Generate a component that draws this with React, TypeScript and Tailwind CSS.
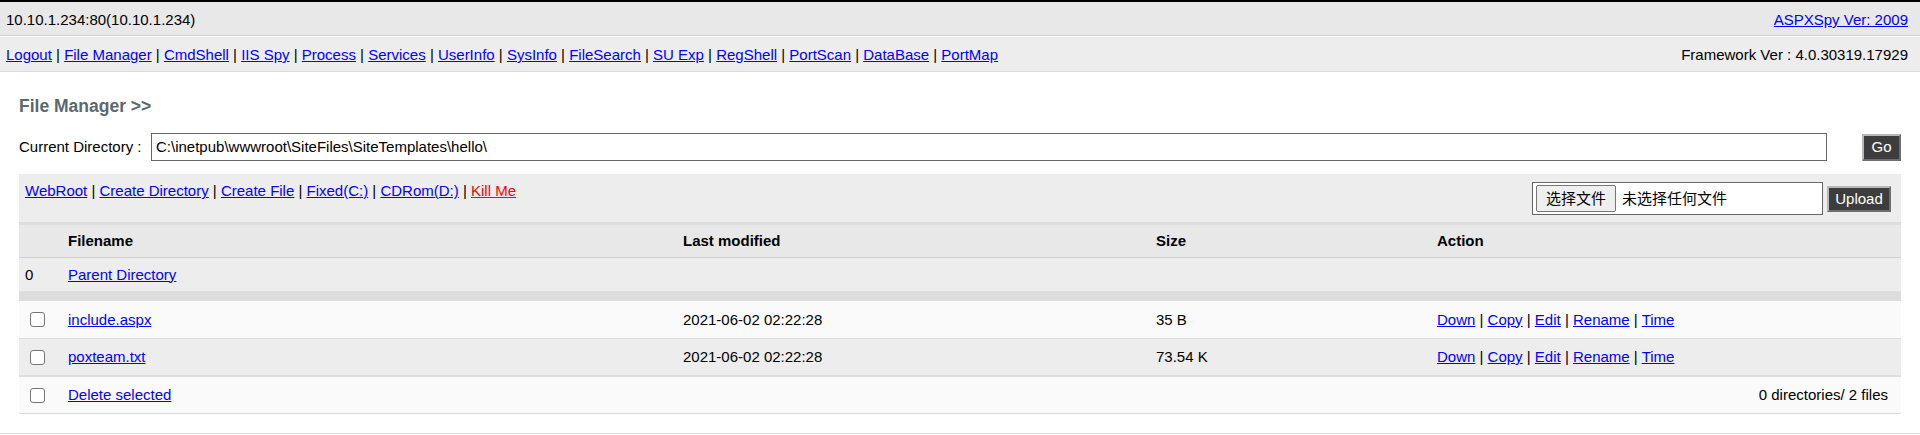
import React from 'react';

const navItems = [
  'Logout',
  'File Manager',
  'CmdShell',
  'IIS Spy',
  'Process',
  'Services',
  'UserInfo',
  'SysInfo',
  'FileSearch',
  'SU Exp',
  'RegShell',
  'PortScan',
  'DataBase',
  'PortMap',
];

const toolItems = ['WebRoot', 'Create Directory', 'Create File', 'Fixed(C:)', 'CDRom(D:)'];
const actions = ['Down', 'Copy', 'Edit', 'Rename', 'Time'];

const files = [
  { name: 'include.aspx', modified: '2021-06-02 02:22:28', size: '35 B' },
  { name: 'poxteam.txt', modified: '2021-06-02 02:22:28', size: '73.54 K' },
];

function Link({ children, red }: { children: React.ReactNode; red?: boolean }) {
  return (
    <a href="#" className={red ? 'text-[#ff0000] underline' : 'text-[#0000ff] underline'}>
      {children}
    </a>
  );
}

function LinkList({ items }: { items: string[] }) {
  return (
    <>
      {items.map((item, i) => (
        <React.Fragment key={item}>
          {i > 0 && ' | '}
          <Link>{item}</Link>
        </React.Fragment>
      ))}
    </>
  );
}

function Check() {
  return (
    <input
      type="checkbox"
      className="ml-[11px] block h-[15px] w-[15px] appearance-none rounded-[3px] border border-[#767676] bg-white"
    />
  );
}

export default function App() {
  return (
    <div className="min-h-[435px] bg-white font-['Liberation_Sans','Noto_Sans_CJK_SC',Arial,sans-serif] text-[15px] leading-[20px] text-black">
      <div className="h-[2px] bg-black" />

      {/* top info bar */}
      <div className="flex h-[34px] justify-between border-b border-[#d4d4d4] bg-[#e8e8e8] pl-[6px] pr-[12px] pt-[8px]">
        <span>10.10.1.234:80(10.10.1.234)</span>
        <Link>ASPXSpy Ver: 2009</Link>
      </div>

      {/* navigation */}
      <div className="flex h-[36px] justify-between border-t border-b border-t-white border-b-[#dddddd] bg-[#ededed] pl-[6px] pr-[12px] pt-[8px]">
        <span>
          <LinkList items={navItems} />
        </span>
        <span>Framework Ver : 4.0.30319.17929</span>
      </div>

      <div className="px-[19px] pt-[19px]">
        <h2 className="h-[30px] text-[17.5px] font-bold leading-[30px] text-[#5b686f]">File Manager &gt;&gt;</h2>

        <div className="mt-[12px] flex h-[28px] items-center">
          <span className="w-[132px] shrink-0">Current Directory :</span>
          <div className="flex h-[28px] w-[1676px] items-center border border-[#666666] bg-white px-[4px]">
            C:\inetpub\wwwroot\SiteFiles\SiteTemplates\hello\
          </div>
          <div className="flex-1" />
          <button className="h-[27px] w-[39px] border-2 border-t-[#b8b8b8] border-l-[#b8b8b8] border-r-[#6e6e6e] border-b-[#6e6e6e] bg-[#3d3d3d] text-[15px] text-white">
            Go
          </button>
        </div>

        {/* toolbar */}
        <div className="mt-[13px] flex h-[51px] items-start justify-between border-b-[3px] border-[#dddddd] bg-[#ededed] pl-[6px] pr-[10px] pt-[8px]">
          <span className="-mt-[1px]">
            <LinkList items={toolItems} /> | <Link red>Kill Me</Link>
          </span>
          <div className="flex items-center gap-[4px]">
            <div className="flex h-[33px] w-[291px] items-center border border-[#666666] bg-white pl-[3px]">
              <span className="flex h-[27px] w-[80px] items-center justify-center rounded-[2px] border border-[#767676] bg-[#efefef] text-[15px]">
                选择文件
              </span>
              <span className="ml-[6px]">未选择任何文件</span>
            </div>
            <button className="h-[26px] w-[64px] border-2 border-t-[#b8b8b8] border-l-[#b8b8b8] border-r-[#6e6e6e] border-b-[#6e6e6e] bg-[#3d3d3d] text-[15px] text-white">
              Upload
            </button>
          </div>
        </div>

        {/* header */}
        <div className="grid h-[33px] grid-cols-[43px_614px_473px_282px_1fr] items-center border-b border-[#d0d0d0] bg-[#e8e8e8] font-bold">
          <span />
          <span className="pl-[6px]">Filename</span>
          <span className="pl-[7px]">Last modified</span>
          <span className="pl-[7px]">Size</span>
          <span className="pl-[6px]">Action</span>
        </div>

        {/* parent directory */}
        <div className="grid h-[33px] grid-cols-[43px_614px_473px_282px_1fr] items-center bg-[#ededed]">
          <span className="pl-[6px]">0</span>
          <span className="pl-[6px]">
            <Link>Parent Directory</Link>
          </span>
        </div>
        <div className="h-[10px] bg-[#dddddd]" />

        {files.map((f, i) => (
          <div
            key={f.name}
            className={
              i === 0
                ? 'grid h-[38px] grid-cols-[43px_614px_473px_282px_1fr] items-center border-b border-[#dddddd] bg-[#fafafa]'
                : 'grid h-[38px] grid-cols-[43px_614px_473px_282px_1fr] items-center border-b-2 border-[#dddddd] bg-[#ededed]'
            }
          >
            <span>
              <Check />
            </span>
            <span className="pl-[6px]">
              <Link>{f.name}</Link>
            </span>
            <span className="pl-[7px]">{f.modified}</span>
            <span className="pl-[7px]">{f.size}</span>
            <span className="pl-[6px]">
              <LinkList items={actions} />
            </span>
          </div>
        ))}

        <div className="flex h-[37px] items-center border-b border-[#dddddd] bg-[#fafafa]">
          <span className="w-[43px] shrink-0">
            <Check />
          </span>
          <span className="pl-[6px]">
            <Link>Delete selected</Link>
          </span>
          <span className="ml-auto pr-[13px]">0 directories/ 2 files</span>
        </div>
      </div>

      <div className="mt-[19px] border-t border-[#dddddd]" />
    </div>
  );
}
